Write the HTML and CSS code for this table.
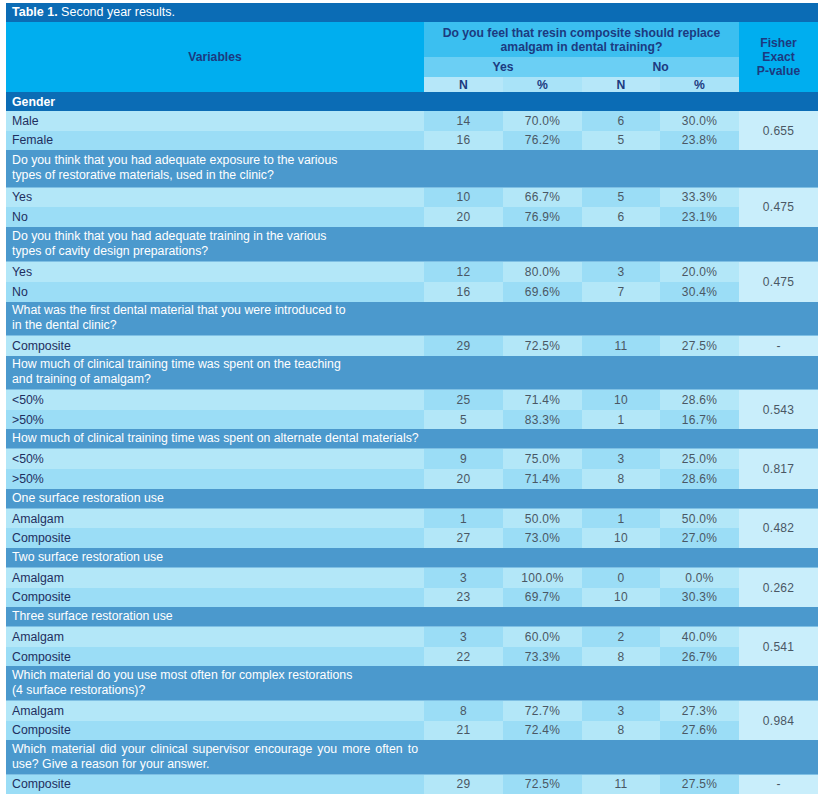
FILE: index.html
```html
<!DOCTYPE html>
<html lang="en">
<head>
<meta charset="utf-8">
<title>Table 1. Second year results.</title>
<link rel="stylesheet" href="styles.css">
</head>
<body>
<div class="wrap">
  <div class="title"><b>Table 1.</b> Second year results.</div>
  <table class="results">
    <colgroup>
      <col class="c-var"><col class="c-n1"><col class="c-p1"><col class="c-n2"><col class="c-p2"><col class="c-f">
    </colgroup>
    <thead>
      <tr class="h1">
        <th rowspan="3" class="h-var">Variables</th>
        <th colspan="4" class="h-q">Do you feel that resin composite should replace<br>amalgam in dental training?</th>
        <th rowspan="3" class="h-f">Fisher<br>Exact<br>P-value</th>
      </tr>
      <tr class="h2">
        <th colspan="2" class="h-yn">Yes</th>
        <th colspan="2" class="h-yn">No</th>
      </tr>
      <tr class="h3">
        <th class="h-n">N</th><th class="h-p">%</th><th class="h-n">N</th><th class="h-p">%</th>
      </tr>
    </thead>
    <tbody>
      <tr class="sec"><td colspan="6">Gender</td></tr>
      <tr class="row a"><td class="v">Male</td><td>14</td><td>70.0%</td><td>6</td><td>30.0%</td><td rowspan="2" class="f">0.655</td></tr>
      <tr class="row b"><td class="v">Female</td><td>16</td><td>76.2%</td><td>5</td><td>23.8%</td></tr>

      <tr class="q tall"><td colspan="6">Do you think that you had adequate exposure to the various<br>types of restorative materials, used in the clinic?</td></tr>
      <tr class="row a"><td class="v">Yes</td><td>10</td><td>66.7%</td><td>5</td><td>33.3%</td><td rowspan="2" class="f">0.475</td></tr>
      <tr class="row b"><td class="v">No</td><td>20</td><td>76.9%</td><td>6</td><td>23.1%</td></tr>

      <tr class="q mid"><td colspan="6">Do you think that you had adequate training in the various<br>types of cavity design preparations?</td></tr>
      <tr class="row a"><td class="v">Yes</td><td>12</td><td>80.0%</td><td>3</td><td>20.0%</td><td rowspan="2" class="f">0.475</td></tr>
      <tr class="row b"><td class="v">No</td><td>16</td><td>69.6%</td><td>7</td><td>30.4%</td></tr>

      <tr class="q two"><td colspan="6">What was the first dental material that you were introduced to<br>in the dental clinic?</td></tr>
      <tr class="row a"><td class="v">Composite</td><td>29</td><td>72.5%</td><td>11</td><td>27.5%</td><td class="f">-</td></tr>

      <tr class="q two"><td colspan="6">How much of clinical training time was spent on the teaching<br>and training of amalgam?</td></tr>
      <tr class="row a"><td class="v">&lt;50%</td><td>25</td><td>71.4%</td><td>10</td><td>28.6%</td><td rowspan="2" class="f">0.543</td></tr>
      <tr class="row b"><td class="v">&gt;50%</td><td>5</td><td>83.3%</td><td>1</td><td>16.7%</td></tr>

      <tr class="q"><td colspan="6">How much of clinical training time was spent on alternate dental materials?</td></tr>
      <tr class="row a"><td class="v">&lt;50%</td><td>9</td><td>75.0%</td><td>3</td><td>25.0%</td><td rowspan="2" class="f">0.817</td></tr>
      <tr class="row b"><td class="v">&gt;50%</td><td>20</td><td>71.4%</td><td>8</td><td>28.6%</td></tr>

      <tr class="q"><td colspan="6">One surface restoration use</td></tr>
      <tr class="row a"><td class="v">Amalgam</td><td>1</td><td>50.0%</td><td>1</td><td>50.0%</td><td rowspan="2" class="f">0.482</td></tr>
      <tr class="row b"><td class="v">Composite</td><td>27</td><td>73.0%</td><td>10</td><td>27.0%</td></tr>

      <tr class="q"><td colspan="6">Two surface restoration use</td></tr>
      <tr class="row a"><td class="v">Amalgam</td><td>3</td><td>100.0%</td><td>0</td><td>0.0%</td><td rowspan="2" class="f">0.262</td></tr>
      <tr class="row b"><td class="v">Composite</td><td>23</td><td>69.7%</td><td>10</td><td>30.3%</td></tr>

      <tr class="q"><td colspan="6">Three surface restoration use</td></tr>
      <tr class="row a"><td class="v">Amalgam</td><td>3</td><td>60.0%</td><td>2</td><td>40.0%</td><td rowspan="2" class="f">0.541</td></tr>
      <tr class="row b"><td class="v">Composite</td><td>22</td><td>73.3%</td><td>8</td><td>26.7%</td></tr>

      <tr class="q two"><td colspan="6">Which material do you use most often for complex restorations<br>(4 surface restorations)?</td></tr>
      <tr class="row a"><td class="v">Amalgam</td><td>8</td><td>72.7%</td><td>3</td><td>27.3%</td><td rowspan="2" class="f">0.984</td></tr>
      <tr class="row b"><td class="v">Composite</td><td>21</td><td>72.4%</td><td>8</td><td>27.6%</td></tr>

      <tr class="q two"><td class="just">Which material did your clinical supervisor encourage you more often to use? Give a reason for your answer.</td><td colspan="5"></td></tr>
      <tr class="row b"><td class="v">Composite</td><td>29</td><td>72.5%</td><td>11</td><td>27.5%</td><td class="f">-</td></tr>
    </tbody>
  </table>
</div>
</body>
</html>
```

FILE: styles.css
```css
html, body {
  margin: 0;
  padding: 0;
  background: #ffffff;
}

body {
  font-family: "Liberation Sans", Arial, Helvetica, sans-serif;
  font-size: 12px;
}

.wrap {
  padding: 3px 6px 0 6px;
  width: 812px;
}

.title {
  background: #0b6cb5;
  color: #ffffff;
  height: 19px;
  line-height: 19px;
  padding-left: 6px;
  font-size: 12.5px;
}

.title b {
  font-weight: bold;
}

.results {
  width: 812px;
  border-collapse: collapse;
  border-spacing: 0;
  table-layout: fixed;
}

.c-var { width: 418px; }
.c-n1 { width: 79px; }
.c-p1 { width: 79px; }
.c-n2 { width: 78px; }
.c-p2 { width: 79px; }
.c-f { width: 79px; }

.results th,
.results td {
  padding: 0;
  border: 0;
}

.results th {
  color: #1c3a80;
  font-weight: bold;
  text-align: center;
  vertical-align: middle;
  line-height: 14px;
  font-size: 12.2px;
}

.h1 { height: 35px; }
.h2 { height: 20px; }
.h3 { height: 15px; }

.h-var { background: #00aeef; }
.h-f { background: #00aeef; }
.h-q { background: #3bbff0; }
.h-yn { background: #6bcff4; }
.h-n { background: #b6e7f9; }
.h-p { background: #a9e3f8; }

.sec td {
  background: #0b6cb5;
  color: #ffffff;
  font-weight: bold;
  font-size: 12.3px;
  height: 19px;
  padding-left: 6px;
  line-height: 14px;
}

.q td {
  background: #4b99cd;
  color: #ffffff;
  font-size: 12.3px;
  height: 19.6px;
  padding: 0 5px 0 6px;
  line-height: 15px;
  vertical-align: middle;
  border-bottom: 1px solid #7fc0e4;
  box-sizing: border-box;
}

.q.two td { height: 34px; }
.q.mid td { height: 35px; }
.q.tall td { height: 37px; }

.q td.just {
  text-align: justify;
  padding-right: 6px;
}

.row td {
  height: 19.6px;
  text-align: center;
  color: #4a5764;
  vertical-align: middle;
  line-height: 14px;
  letter-spacing: 0.3px;
}

.row td.v {
  text-align: left;
  padding-left: 6px;
  color: #1f2f60;
  font-size: 12.3px;
  letter-spacing: 0;
}

/* checker pattern */
.row.a td { background: #b3e7f8; }
.row.a td:nth-child(2),
.row.a td:nth-child(4) { background: #9bddf6; }

.row.b td { background: #9bddf6; }
.row.b td:nth-child(2),
.row.b td:nth-child(4) { background: #b3e7f8; }

.row td.f,
.row.a td.f,
.row.b td.f {
  background: #c9eefb;
  color: #4a5764;
}
```
